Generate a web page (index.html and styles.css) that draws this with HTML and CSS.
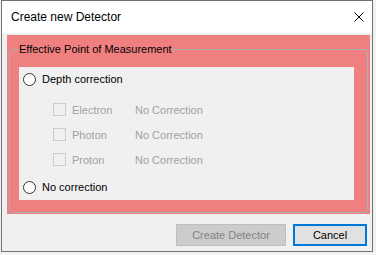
FILE: index.html
```html
<!DOCTYPE html>
<html>
<head>
<meta charset="utf-8">
<link rel="stylesheet" href="styles.css">
</head>
<body>
<div class="window">
  <div class="titlebar">
    <span class="title">Create new Detector</span>
    <svg class="close" width="10" height="10" viewBox="0 0 10 10"><path d="M0.5 0.5 L9.5 9.5 M9.5 0.5 L0.5 9.5" stroke="#000" stroke-width="1" fill="none"/></svg>
  </div>
  <div class="client">
    <div class="redpanel">
      <fieldset class="group">
        <legend class="legend">Effective Point of Measurement</legend>
        <div class="inner">
          <div class="radio-row"><span class="radio"></span><span class="label">Depth correction</span></div>
          <div class="checks">
            <div class="check-row"><span class="check"></span><span class="cname">Electron</span><span class="cval">No Correction</span></div>
            <div class="check-row"><span class="check"></span><span class="cname">Photon</span><span class="cval">No Correction</span></div>
            <div class="check-row"><span class="check"></span><span class="cname">Proton</span><span class="cval">No Correction</span></div>
          </div>
          <div class="radio-row last"><span class="radio"></span><span class="label">No correction</span></div>
        </div>
      </fieldset>
    </div>
    <div class="buttons">
      <button class="btn btn-disabled">Create Detector</button>
      <button class="btn btn-default">Cancel</button>
    </div>
  </div>
</div>
</body>
</html>
```

FILE: styles.css
```css
html, body {
  margin: 0;
  padding: 0;
}
body {
  background: #f2f2f2;
  font-family: "Liberation Sans", Arial, sans-serif;
  font-size: 11px;
  color: #000;
}
.window {
  box-sizing: border-box;
  width: 372px;
  height: 252px;
  margin-left: 1px;
  border: 1px solid #707070;
  background: #f0f0f0;
  display: flex;
  flex-direction: column;
}
.titlebar {
  height: 32px;
  flex: none;
  background: #fff;
  display: flex;
  align-items: center;
  justify-content: space-between;
  padding: 0 8px 0 9px;
}
.title {
  font-size: 12px;
}
.close {
  display: block;
}
.client {
  flex: 1;
  display: flex;
  flex-direction: column;
  padding: 2px 2px 0 5px;
}
.redpanel {
  box-sizing: border-box;
  height: 179px;
  background: #f08080;
  padding: 7px 2px 1px 2px;
  display: flex;
  flex-direction: column;
}
.group {
  flex: 1;
  margin: 0;
  min-width: 0;
  border: 1px solid #adadad;
  border-radius: 3px;
  padding: 10px 13px 12px 9px;
}
.legend {
  padding: 0;
  line-height: 15px;
  font-size: 11px;
}
.inner {
  height: 133px;
  box-sizing: border-box;
  background: #f0f0f0;
  padding-left: 4px;
}
.radio-row {
  height: 24px;
  display: flex;
  align-items: center;
  gap: 6px;
}
.radio-row.last {
  margin-top: 3px;
}
.radio {
  box-sizing: border-box;
  width: 13px;
  height: 13px;
  border: 1px solid #333;
  border-radius: 50%;
  background: #fff;
}
.label {
  font-size: 11px;
}
.checks {
  margin-top: 6px;
  padding-left: 30px;
}
.check-row {
  height: 25px;
  display: flex;
  align-items: center;
  color: #a0a0a0;
}
.check {
  box-sizing: border-box;
  width: 13px;
  height: 13px;
  border: 1px solid #cccccc;
  background: #f0f0f0;
  margin-right: 6px;
}
.cname {
  width: 63px;
}
.buttons {
  display: flex;
  justify-content: flex-end;
  gap: 7px;
  margin-top: 10px;
  padding-right: 3px;
}
.btn {
  box-sizing: border-box;
  height: 22px;
  margin: 0;
  padding: 0;
  font-family: "Liberation Sans", Arial, sans-serif;
  font-size: 11px;
}
.btn-disabled {
  width: 110px;
  background: #cccccc;
  border: 1px solid #bfbfbf;
  color: #838383;
}
.btn-default {
  width: 74px;
  background: #e1e1e1;
  border: 2px solid #0078d7;
  color: #000;
}
```
